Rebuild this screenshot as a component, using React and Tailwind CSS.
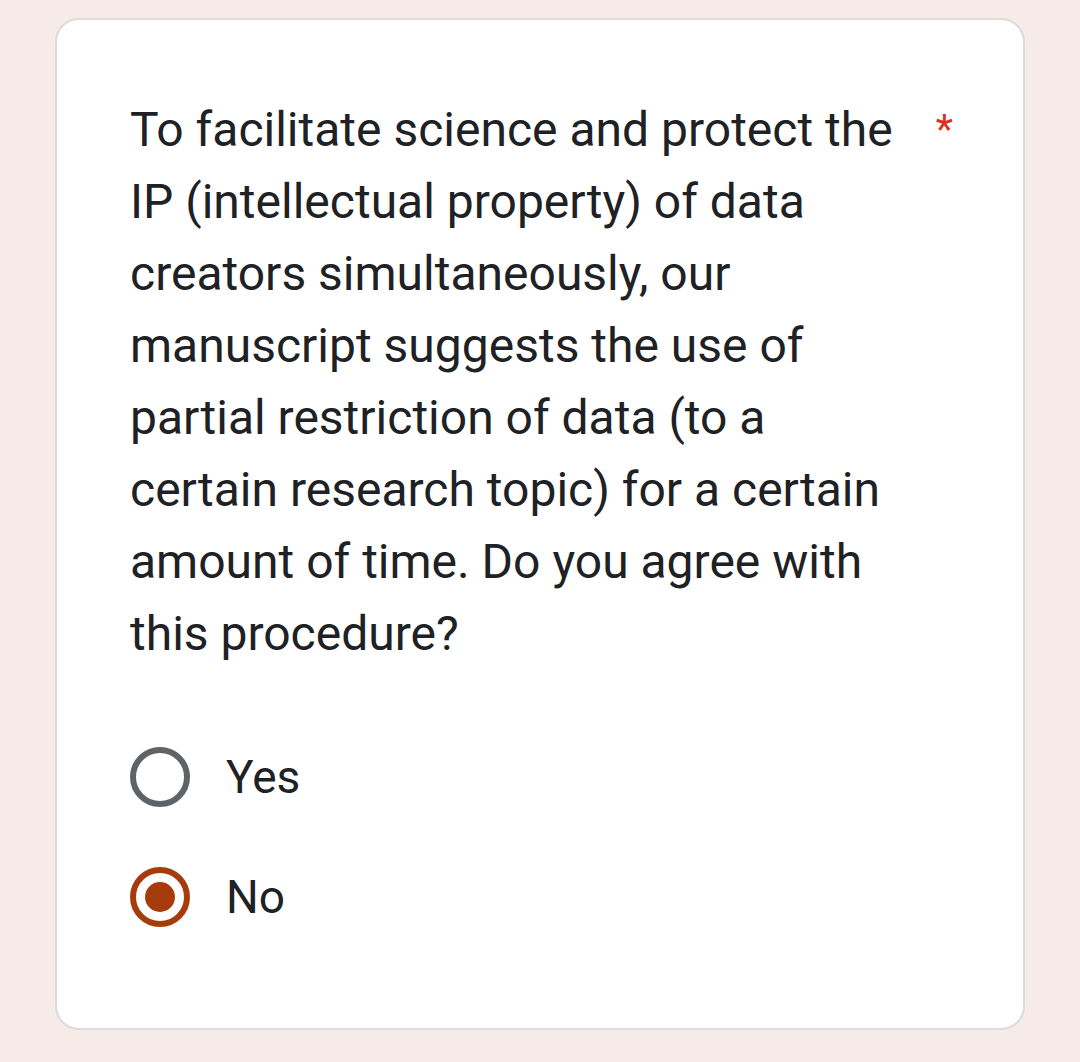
function Radio({ checked }) {
    return (
        <span className={`flex items-center justify-center w-[60px] h-[60px] rounded-full border-[6px] ${checked ? "border-[#a63c0c]" : "border-[#5f6368]"}`}>
            {checked && <span className="w-[30px] h-[30px] rounded-full bg-[#a63c0c]"></span>}
        </span>
    );
}

export default function App() {
    const options = [
        { label: "Yes", checked: false },
        { label: "No", checked: true },
    ];

    return (
        <div className="min-h-[1062px] bg-[#f6ebe7] pt-[18px] px-[55px] font-['Roboto',sans-serif]">
            <div className="bg-white border-2 border-[#dcdadb] rounded-[24px] h-[1012px] pl-[73px] pr-[60px] pt-[74px]">
                {/* QUESTION */}
                <div className="flex items-start">
                    <p className="w-[790px] text-[48px] leading-[72px] text-[#202124]">
                        To facilitate science and protect the IP (intellectual property) of data creators simultaneously, our manuscript suggests the use of partial restriction of data (to a certain research topic) for a certain amount of time. Do you agree with this procedure?
                    </p>
                    <span className="ml-auto text-[40px] leading-[72px] text-[#d93025] pr-[10px]">*</span>
                </div>

                {/* OPTIONS */}
                <div className="mt-[77px] grid gap-[60px]">
                    {options.map((o) => (
                        <div key={o.label} className="flex items-center gap-[36px]">
                            <Radio checked={o.checked} />
                            <span className="text-[46px] leading-[60px] text-[#202124]">{o.label}</span>
                        </div>
                    ))}
                </div>
            </div>
        </div>
    );
}
